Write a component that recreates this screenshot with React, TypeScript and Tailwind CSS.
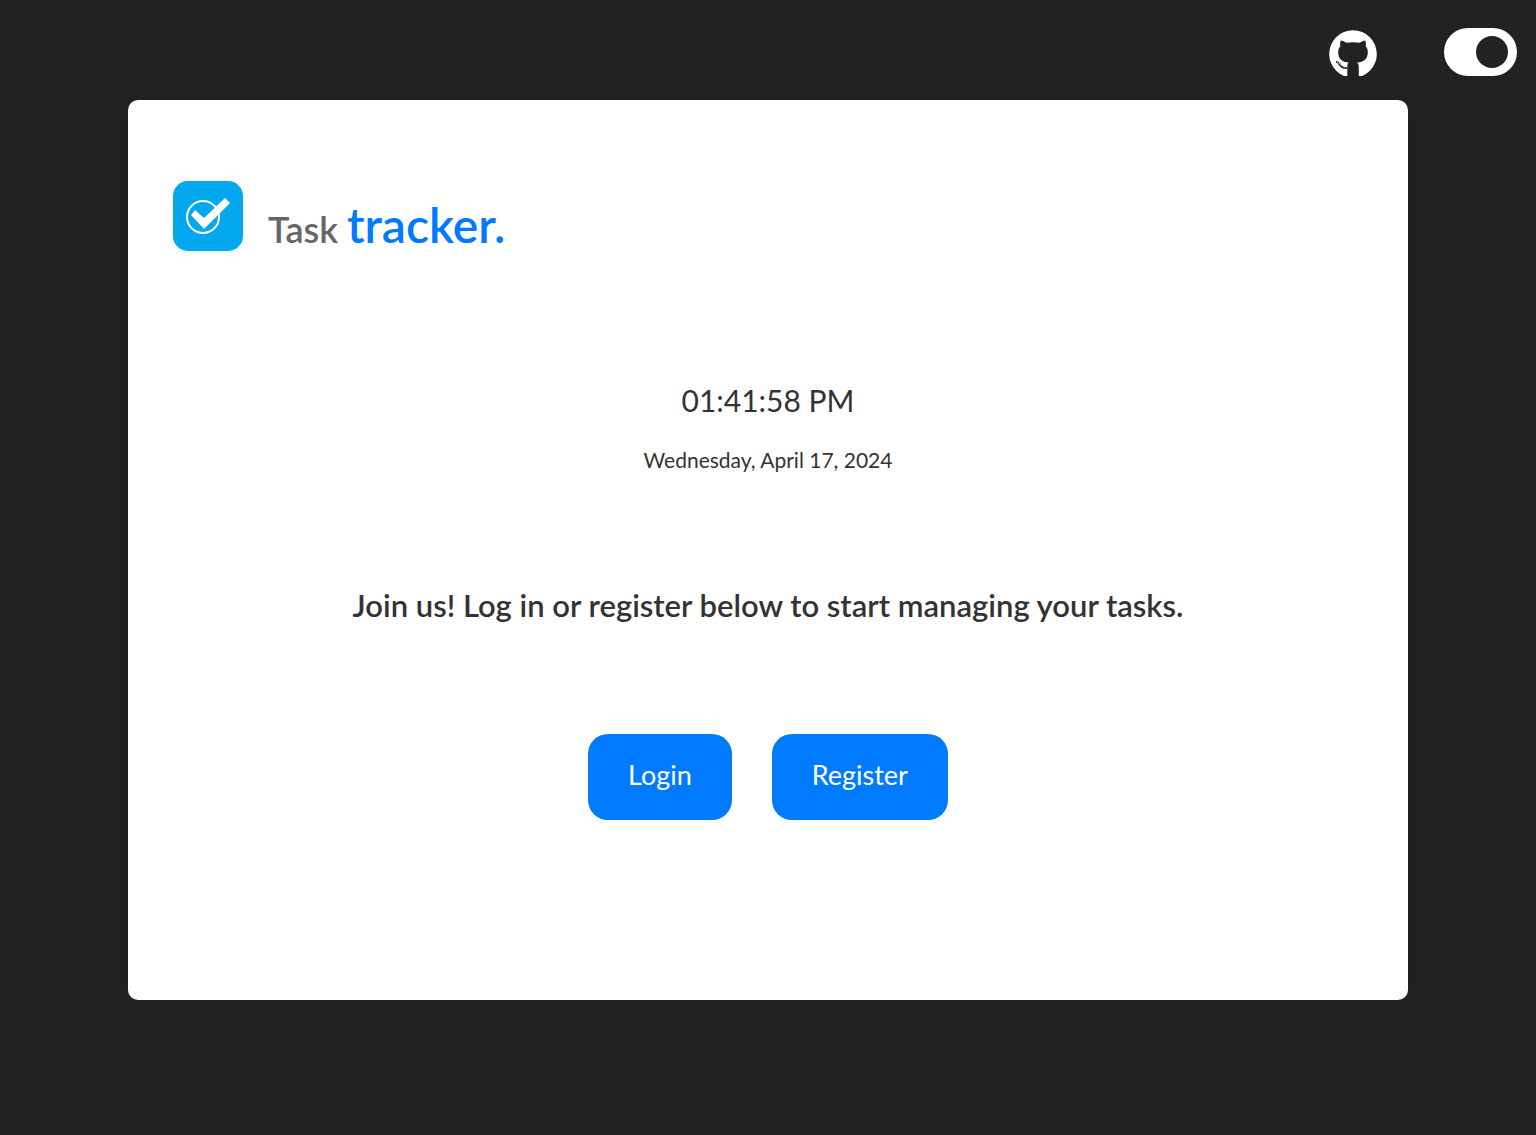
import { useState } from "react";

function Logo() {
  return (
    <svg viewBox="0 0 70 70" className="size-[70px] shrink-0" role="img" aria-label="Task tracker logo">
      <rect width="70" height="70" rx="15" fill="#02a8ee" />
      <circle cx="30" cy="36" r="16" fill="none" stroke="#fff" strokeWidth="2" />
      <path d="M18 34L22 29L31 37L52 17L57 22L31 48Z" fill="#fff" />
    </svg>
  );
}

function GitHubMark() {
  return (
    <svg viewBox="0 0 48 46" className="h-[46px] w-12" aria-hidden="true">
      <circle cx="24" cy="24" r="23.8" fill="#fff" />
      <path d="M11.7 10.5C13.7 10.7 15.5 11.5 17.3 12.8Q24 11.8 30.7 12.8C32.5 11.5 34.3 10.7 36.3 10.5Q37.4 13.5 36.8 16.2Q38.8 18.4 38.8 22C38.8 29 35 32 28.3 32.6Q29.8 34.3 29.8 38V46H18.3V35.5Q18.6 33.8 19.7 32.6C13 32 9.2 29 9.2 22Q9.2 18.4 11.2 16.2Q10.6 13.5 11.7 10.5Z" fill="#222222" />
      <path d="M7 32Q9.3 31.8 10.8 34.8Q13 38.3 18.4 38" fill="none" stroke="#222222" strokeWidth="2.2" strokeDasharray="1.3 0.6" />
      <path d="M10 34Q12.6 38.8 18.4 38.4" fill="none" stroke="#222222" strokeWidth="1" />
    </svg>
  );
}

export default function App() {
  const [dark, setDark] = useState(true);
  return (
    <div className="min-h-screen bg-[#222222] font-[Lato,sans-serif] text-[#333333]">
      <header className="flex h-[100px] items-center justify-end gap-[67px] pt-1.5 pr-[19px]">
        <a href="#github" aria-label="GitHub"><GitHubMark /></a>
        <label className="relative mb-0.5 h-12 w-[73px] cursor-pointer rounded-full bg-white">
          <input type="checkbox" checked={dark} onChange={() => setDark(!dark)} className="sr-only" aria-label="Dark mode" />
          <span className="absolute top-2 right-[9px] size-8 rounded-full bg-[#222222]" />
        </label>
      </header>
      <main className="mx-32 flex min-h-[900px] flex-col rounded-[10px] bg-white shadow-[0_0_20px_rgba(0,0,0,0.1)]">
        <div className="mx-[45px] mt-[81px] flex items-end gap-[25px]">
          <Logo />
          <h1 className="pb-0.5 text-4xl font-semibold text-[#666666]">Task <span className="text-5xl text-[#007bff]">tracker.</span></h1>
        </div>
        <section className="mt-[125px] flex flex-col items-center">
          <time className="text-[30px] leading-[48px]">01:41:58 PM</time>
          <p className="mt-5 text-[21px] leading-8">Wednesday, April 17, 2024</p>
          <h2 className="mt-[109px] text-[31px] leading-10 font-semibold">Join us! Log in or register below to start managing your tasks.</h2>
          <div className="mt-[109px] flex gap-10">
            <button className="h-[86px] rounded-[20px] bg-[#007bff] px-10 pb-1 text-[27px] text-white">Login</button>
            <button className="h-[86px] rounded-[20px] bg-[#007bff] px-10 pb-1 text-[27px] text-white">Register</button>
          </div>
        </section>
      </main>
    </div>
  );
}
